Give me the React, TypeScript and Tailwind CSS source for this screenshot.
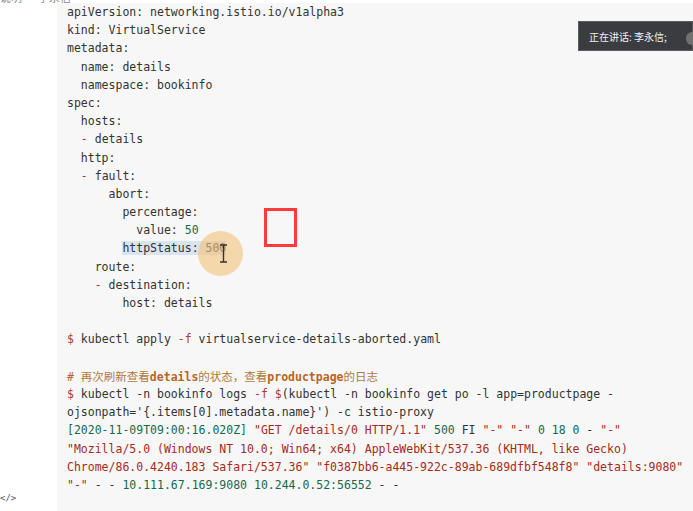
import React from "react";

type Seg = [string, string?];

const K = "text-[#333333]";
const R = "text-[#b13a2c]";
const G = "text-[#17684c]";
const S = "text-[#a52a22]";

const lines: Seg[][] = [
  [["apiVersion: networking.istio.io/v1alpha3"]],
  [["kind: VirtualService"]],
  [["metadata:"]],
  [["  name: details"]],
  [["  namespace: bookinfo"]],
  [["spec:"]],
  [["  hosts:"]],
  [["  "], ["-", R], [" details"]],
  [["  http:"]],
  [["  "], ["-", R], [" fault:"]],
  [["      abort:"]],
  [["        percentage:"]],
  [["          value: "], ["50", G]],
  [["        "], ["httpStatus: 500", "sel"]],
  [["    route:"]],
  [["    "], ["-", R], [" destination:"]],
  [["        host: details"]],
  [[" "]],
  [["$", R], [" kubectl apply "], ["-f", R], [" virtualservice-details-aborted.yaml"]],
  [[" "]],
  [["comment", "comment"]],
  [
    ["$", R],
    [" kubectl -n bookinfo logs "],
    ["-f", R],
    [" "],
    ["$", R],
    ["(kubectl -n bookinfo get po -l app=productpage -"],
  ],
  [["ojsonpath='{.items[0].metadata.name}') -c istio-proxy"]],
  [
    ["[2020-11-09T09:00:16.020Z]", G],
    [" "],
    ['"GET /details/0 HTTP/1.1"', S],
    [" "],
    ["500", G],
    [" FI "],
    ['"-" "-"', S],
    [" "],
    ["0 18 0", G],
    [" - "],
    ['"-"', S],
  ],
  [['"Mozilla/5.0 (Windows NT 10.0; Win64; x64) AppleWebKit/537.36 (KHTML, like Gecko)', S]],
  [['Chrome/86.0.4240.183 Safari/537.36" "f0387bb6-a445-922c-89ab-689dfbf548f8" "details:9080"', S]],
  [['"-"', S], [" - - "], ["10.111.67.169:9080 10.244.0.52:56552", G], [" - -"]],
];

const cjk = { fontFamily: '"Noto Sans CJK SC", "Noto Sans", sans-serif' };

function Comment() {
  return (
    <span className="text-[#b07a3e]">
      <span className="text-[#b8661f]"># </span>
      <span style={cjk}>再次刷新查看</span>
      <span className="font-bold text-[#b8661f]">details</span>
      <span style={cjk}>的状态，查看</span>
      <span className="font-bold text-[#b8661f]">productpage</span>
      <span style={cjk}>的日志</span>
    </span>
  );
}

function Line({ segs }: { segs: Seg[] }) {
  return (
    <div className="h-[18.2px] leading-[18.2px] whitespace-pre">
      {segs.map(([text, cls], i) => {
        if (cls === "comment") return <Comment key={i} />;
        if (cls === "sel")
          return (
            <span key={i} className="bg-[#d9e4ee] text-[#333]">
              {text}
            </span>
          );
        return (
          <span key={i} className={cls ?? K}>
            {text}
          </span>
        );
      })}
    </div>
  );
}

export default function App() {
  return (
    <div
      className="relative flex h-[511px] w-[693px] overflow-hidden bg-white"
      style={{ fontFamily: '"DejaVu Sans Mono", "Liberation Mono", monospace' }}
    >
      <div className="flex w-[57px] shrink-0 flex-col justify-between">
        <div className="-mt-[11px] whitespace-nowrap text-[11px] text-[#888]" style={cjk}>
          说明 · 李永信
        </div>
        <div className="mb-[6px] text-[9px] text-[#555]">&lt;/&gt;</div>
      </div>

      <div className="mt-[3px] flex-1 bg-[#f7f7f7] pl-[10px] text-[11.5px]">
        {lines.map((segs, i) => (
          <Line key={i} segs={segs} />
        ))}
      </div>

      {/* cursor highlight */}
      <div className="absolute left-[198px] top-[231px] h-[45px] w-[45px] rounded-full bg-[#f3c27a]/60" />
      <svg className="absolute left-[219px] top-[244px]" width="9" height="19" viewBox="0 0 9 19">
        <path d="M1 1h7M4.5 1v17M1 18h7" stroke="#333" strokeWidth="1.4" fill="none" />
      </svg>

      {/* red annotation box */}
      <div className="absolute left-[264px] top-[208px] h-[39px] w-[33px] border-[3px] border-[#ff3b3b]" />

      {/* speaking tooltip */}
      <div className="absolute right-0 top-[21px] flex h-[30px] w-[115px] items-center border border-[#5a5b5e] bg-[#3b3c3f] pl-[10px]">
        <span className="text-[10px] text-[#f0f0f0]" style={cjk}>
          正在讲话: 李永信;
        </span>
        <div className="absolute -right-[6px] top-[10px] h-[13px] w-[12px] rounded-full bg-[#707070]" />
      </div>
    </div>
  );
}
